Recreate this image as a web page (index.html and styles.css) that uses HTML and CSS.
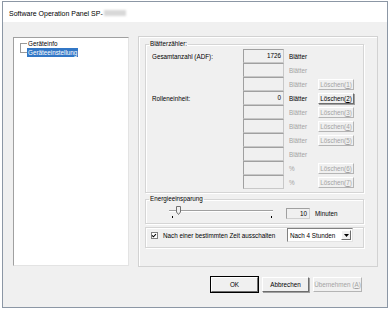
FILE: index.html
```html
<!DOCTYPE html>
<html lang="de">
<head>
    <meta charset="UTF-8">
    <meta name="viewport" content="width=device-width, initial-scale=1.0">
    <title>Software Operation Panel</title>
    <link rel="stylesheet" href="styles.css">
</head>
<body>

    <div class="window">

        <!-- Titelleiste -->
        <div class="titlebar">
            <span>Software Operation Panel SP-</span><span class="redacted"></span>
        </div>

        <div class="client">
            <div class="main">

                <!-- Baumansicht links -->
                <ul class="tree">
                    <li class="node first"><span class="twig"><i class="up"></i><i class="down"></i></span><span class="node-text">Geräteinfo</span></li>
                    <li class="node last"><span class="twig"><i class="up"></i><i class="down"></i></span><span class="node-text selected">Geräteeinstellung</span></li>
                </ul>

                <!-- Einstellungsseite -->
                <div class="panel">

                    <fieldset class="group counter">
                        <legend>Blätterzähler:</legend>

                        <div class="row">
                            <span class="label">Gesamtanzahl (ADF):</span>
                            <span class="field">1726</span>
                            <span class="unit">Blätter</span>
                            <span></span>
                        </div>
                        <div class="row">
                            <span class="label"></span>
                            <span class="field"></span>
                            <span class="unit off">Blätter</span>
                            <span></span>
                        </div>
                        <div class="row">
                            <span class="label"></span>
                            <span class="field"></span>
                            <span class="unit off">Blätter</span>
                            <button class="small" disabled>Löschen(<u>1</u>)</button>
                        </div>
                        <div class="row">
                            <span class="label">Rolleneinheit:</span>
                            <span class="field">0</span>
                            <span class="unit">Blätter</span>
                            <button class="small">Löschen(<u>2</u>)</button>
                        </div>
                        <div class="row">
                            <span class="label"></span>
                            <span class="field"></span>
                            <span class="unit off">Blätter</span>
                            <button class="small" disabled>Löschen(<u>3</u>)</button>
                        </div>
                        <div class="row">
                            <span class="label"></span>
                            <span class="field"></span>
                            <span class="unit off">Blätter</span>
                            <button class="small" disabled>Löschen(<u>4</u>)</button>
                        </div>
                        <div class="row">
                            <span class="label"></span>
                            <span class="field"></span>
                            <span class="unit off">Blätter</span>
                            <button class="small" disabled>Löschen(<u>5</u>)</button>
                        </div>
                        <div class="row">
                            <span class="label"></span>
                            <span class="field"></span>
                            <span class="unit off">Blätter</span>
                            <span></span>
                        </div>
                        <div class="row">
                            <span class="label"></span>
                            <span class="field"></span>
                            <span class="unit off">%</span>
                            <button class="small" disabled>Löschen(<u>6</u>)</button>
                        </div>
                        <div class="row">
                            <span class="label"></span>
                            <span class="field"></span>
                            <span class="unit off">%</span>
                            <button class="small" disabled>Löschen(<u>7</u>)</button>
                        </div>
                    </fieldset>

                    <fieldset class="group energy">
                        <legend>Energieeinsparung</legend>
                        <div class="slider-row">
                            <div class="slider">
                                <span class="track"></span>
                                <svg class="thumb" width="5" height="9" viewBox="0 0 5 9">
                                    <path d="M0.5 0.5 H4.5 V6 L2.5 8.5 L0.5 6 Z" fill="#f0f0f0" stroke="#707070" stroke-width="1"/>
                                </svg>
                                <span class="tick left"></span>
                                <span class="tick right"></span>
                            </div>
                            <span class="minutes">10</span>
                            <span class="minutes-label">Minuten</span>
                        </div>
                    </fieldset>

                    <fieldset class="group shutdown">
                        <div class="check-row">
                            <span class="checkbox">
                                <svg width="7" height="7" viewBox="0 0 7 7">
                                    <path d="M1.2 3.4 L2.8 5 L5.8 1.8" fill="none" stroke="#000" stroke-width="1.2"/>
                                </svg>
                            </span>
                            <span class="check-text">Nach einer bestimmten Zeit ausschalten</span>
                            <span class="select">
                                <span class="select-text">Nach 4 Stunden</span>
                                <span class="select-arrow">
                                    <svg width="5" height="3" viewBox="0 0 5 3"><path d="M0 0 H5 L2.5 3 Z" fill="#000"/></svg>
                                </span>
                            </span>
                        </div>
                    </fieldset>

                </div>
            </div>

            <!-- Dialog-Schaltflächen -->
            <div class="buttons">
                <button class="dlg default">OK</button>
                <button class="dlg">Abbrechen</button>
                <button class="dlg wide" disabled>Übernehmen (<u>A</u>)</button>
            </div>
        </div>
    </div>

</body>
</html>
```

FILE: styles.css
```css
* {
    margin: 0;
    padding: 0;
    box-sizing: border-box;
}

body {
    width: 390px;
    height: 310px;
    background-color: #ffffff;
    font-family: "Liberation Sans", Arial, sans-serif;
    font-size: 6.3px;
    color: #000000;
    overflow: hidden;
}

/* Fensterrahmen */
.window {
    margin: 1px 0 0 2px;
    width: 386px;
    height: 307px;
    border: 1px solid #8c97a5;
    display: flex;
    flex-direction: column;
}

.titlebar {
    height: 20px;
    padding: 2px 0 0 6px;
    display: flex;
    align-items: center;
    font-size: 7px;
    background-color: #ffffff;
}

.redacted {
    display: inline-block;
    width: 22px;
    height: 6px;
    margin-left: 1px;
    background-color: #d8d8d8;
    filter: blur(1px);
}

.client {
    flex: 1;
    background-color: #f0f0f0;
    padding: 14px 9px 0 10px;
    display: flex;
    flex-direction: column;
}

.main {
    display: flex;
    align-items: flex-start;
}

/* Baumansicht */
.tree {
    list-style: none;
    flex-shrink: 0;
    width: 116px;
    height: 229px;
    margin-top: 1px;
    padding: 1px 0 0 6px;
    background-color: #ffffff;
    border: 1px solid;
    border-color: #a0a0a0 #e3e3e3 #e3e3e3 #a0a0a0;
}

.node {
    display: flex;
    height: 9px;
    line-height: 9px;
}

.twig {
    width: 7px;
    display: flex;
    flex-direction: column;
}

.twig i {
    display: block;
    height: 50%;
}

.twig .up {
    border-bottom: 1px solid #9a9a9a;
}

.first .twig .down,
.last .twig .up {
    border-left: 1px solid #9a9a9a;
}

.node-text {
    padding: 0 1px;
}

.node-text.selected {
    background-color: #3277c6;
    color: #ffffff;
}

/* Einstellungsseite */
.panel {
    flex-shrink: 0;
    margin-left: 9px;
    width: 240px;
    height: 231px;
    border: 1px solid #d2d2d2;
    box-shadow: inset 1px 1px 0 #ffffff;
    padding: 3px 13px 0 6px;
}

.group {
    border: 1px solid #d5d5d5;
    box-shadow: inset 1px 1px 0 #ffffff, 1px 1px 0 #ffffff;
    min-width: 0;
}

.group legend {
    margin-left: 3px;
    padding: 0 1px;
    line-height: 8px;
}

.counter {
    padding: 1px 0 3px 0;
}

.row {
    display: grid;
    grid-template-columns: 91px 41px 34px 36px;
    height: 14px;
    padding-left: 6px;
    align-items: center;
}

.field {
    height: 14px;
    line-height: 12px;
    padding-right: 2px;
    text-align: right;
    border: 1px solid;
    border-color: #a0a0a0 #c8c8c8 #c8c8c8 #a0a0a0;
}

.unit {
    padding-left: 5px;
}

.off {
    color: #a3a3a3;
}

button {
    font-family: inherit;
    font-size: inherit;
    color: #000000;
    background-color: #f0f0f0;
    border: 1px solid;
    border-color: #ffffff #6d6d6d #6d6d6d #ffffff;
    box-shadow: 1px 1px 0 #a0a0a0;
}

button:disabled {
    color: #a3a3a3;
    border-color: #ffffff #b4b4b4 #b4b4b4 #ffffff;
    box-shadow: none;
}

.small {
    width: 36px;
    height: 11px;
    line-height: 9px;
}

/* Energieeinsparung */
.energy {
    margin-top: 2px;
    padding: 3px 0 3px 0;
}

.slider-row {
    display: flex;
    align-items: center;
    height: 14px;
    padding-left: 23px;
}

.slider {
    position: relative;
    width: 104px;
    height: 14px;
}

.track {
    position: absolute;
    left: 0;
    right: 0;
    top: 4px;
    height: 2px;
    border-top: 1px solid #a0a0a0;
    border-bottom: 1px solid #ffffff;
}

.thumb {
    position: absolute;
    left: 7px;
    top: 0;
}

.tick {
    position: absolute;
    top: 10px;
    width: 1px;
    height: 2px;
    background-color: #000000;
}

.tick.left {
    left: 3px;
}

.tick.right {
    right: 1px;
}

.minutes {
    margin-left: 13px;
    width: 24px;
    height: 11px;
    line-height: 9px;
    padding-right: 2px;
    text-align: right;
    border: 1px solid;
    border-color: #a0a0a0 #d0d0d0 #d0d0d0 #a0a0a0;
}

.minutes-label {
    margin-left: 5px;
}

/* Automatisch ausschalten */
.shutdown {
    margin-top: 3px;
    padding: 0 10px 5px 5px;
}

.check-row {
    display: flex;
    align-items: center;
    height: 14px;
}

.checkbox {
    width: 7px;
    height: 7px;
    display: flex;
    background-color: #ffffff;
    border: 1px solid #808080;
}

.checkbox svg {
    margin: -1px 0 0 -1px;
}

.check-text {
    flex: 1;
    margin-left: 5px;
}

.select {
    width: 66px;
    height: 14px;
    display: flex;
    align-items: center;
    padding: 1px;
    background-color: #ffffff;
    border: 1px solid;
    border-color: #808080 #e3e3e3 #e3e3e3 #808080;
}

.select-text {
    flex: 1;
    padding-left: 1px;
}

.select-arrow {
    width: 10px;
    height: 10px;
    display: flex;
    align-items: center;
    justify-content: center;
    background-color: #f0f0f0;
    border: 1px solid;
    border-color: #ffffff #6d6d6d #6d6d6d #ffffff;
}

/* Dialog-Schaltflächen */
.buttons {
    display: flex;
    justify-content: flex-end;
    gap: 4px;
    margin: 10px 16px 0 0;
}

.dlg {
    width: 47px;
    height: 15px;
}

.dlg.wide {
    width: 49px;
}

.dlg.default {
    outline: 1px solid #000000;
    outline-offset: 0;
}
```
